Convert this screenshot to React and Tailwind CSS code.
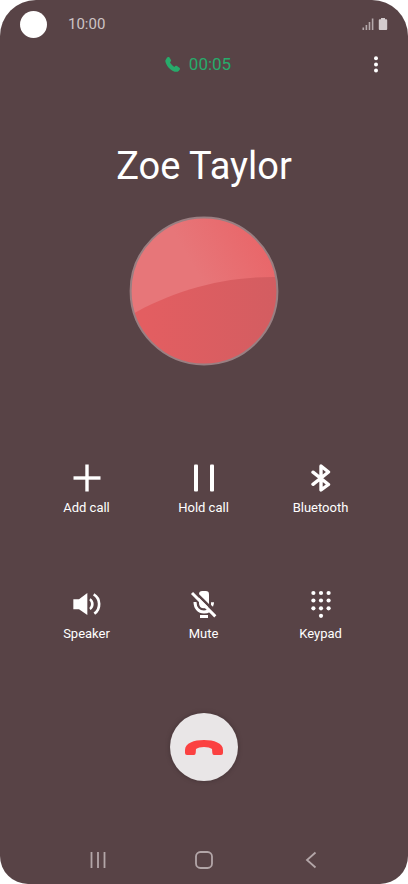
import { useState } from "react";

function AddIcon() {
  return (
    <svg width="28" height="28" viewBox="0 0 28 28" fill="#fff" aria-hidden="true">
      <rect x="0.5" y="12.3" width="27" height="3.4" />
      <rect x="12.3" y="0.5" width="3.4" height="27" />
    </svg>
  );
}

function HoldIcon() {
  return (
    <svg width="28" height="28" viewBox="0 0 28 28" fill="#fff" aria-hidden="true">
      <rect x="4" y="0.5" width="4" height="27" rx="1" />
      <rect x="20" y="0.5" width="4" height="27" rx="1" />
    </svg>
  );
}

function BluetoothIcon() {
  return (
    <svg width="28" height="28" viewBox="0 0 28 28" fill="none" stroke="#fff" strokeWidth="3.4" strokeLinecap="round" strokeLinejoin="round" aria-hidden="true">
      <path d="M6 8.2L21.5 20.5L14 26V2L21.5 8L6 20.3" />
    </svg>
  );
}

function SpeakerIcon() {
  return (
    <svg width="28" height="28" viewBox="0 0 84 84" aria-hidden="true">
      <path d="M1 28H18L43 9V75L18 58H1Z" fill="#fff" />
      <path d="M52 25Q62 31 62 42Q62 54 52 60L49 54Q54 49 54 42Q54 36 49 31Z" fill="#fff" />
      <path d="M62 13C83 25 84 57 64 71" fill="none" stroke="#fff" strokeWidth="8" />
    </svg>
  );
}

function MuteIcon() {
  return (
    <svg width="28" height="28" viewBox="0 0 84 84" aria-hidden="true">
      <path d="M27 13Q27 3 37 3H47Q57 3 57 13V40Q57 55 42 55Q27 55 27 40Z" fill="#fff" />
      <path d="M15 36C15 54 26 66 42 66Q51 66 58 62" fill="none" stroke="#fff" strokeWidth="9" />
      <path d="M17 8L86 77" stroke="#584346" strokeWidth="8" />
      <path d="M63 37H72Q72 44 69 50L63 45Z" fill="#fff" />
      <path d="M6 9L76 79" stroke="#fff" strokeWidth="9" />
      <rect x="30" y="75" width="24" height="9" fill="#fff" />
    </svg>
  );
}

function KeypadIcon() {
  const dots = [
    [6.4, 3], [14, 3], [21.6, 3],
    [6.4, 10.5], [14, 10.5], [21.6, 10.5],
    [6.4, 18.3], [14, 18.3], [21.6, 18.3],
    [14, 25.8],
  ];
  return (
    <svg width="28" height="28" viewBox="0 0 28 28" fill="#fff" aria-hidden="true">
      {dots.map(([cx, cy]) => (
        <circle key={`${cx}-${cy}`} cx={cx} cy={cy} r="2.1" />
      ))}
    </svg>
  );
}

const actions = [
  { label: "Add call", Icon: AddIcon },
  { label: "Hold call", Icon: HoldIcon },
  { label: "Bluetooth", Icon: BluetoothIcon },
  { label: "Speaker", Icon: SpeakerIcon },
  { label: "Mute", Icon: MuteIcon },
  { label: "Keypad", Icon: KeypadIcon },
];

function StatusBar() {
  return (
    <div className="flex h-12 items-center px-5">
      <span className="size-[27px] rounded-full bg-white" />
      <span className="ml-[21px] text-[15px] leading-5 text-[#cdc3c5]">10:00</span>
      <div className="ml-auto flex items-center gap-1">
        <svg width="12" height="12" viewBox="0 0 12 12" fill="#b5a9ab" aria-hidden="true">
          <rect x="0.5" y="9.5" width="1.6" height="2.5" />
          <rect x="3.6" y="7" width="1.6" height="5" />
          <rect x="6.7" y="4" width="1.6" height="8" />
          <rect x="9.8" y="0.5" width="1.6" height="11.5" />
        </svg>
        <svg width="10" height="12" viewBox="0 0 10 12" fill="#d3cbcd" aria-hidden="true">
          <path d="M3 0H7V1.2H8.3Q9.2 1.2 9.2 2.2V11Q9.2 12 8.3 12H1.7Q0.8 12 0.8 11V2.2Q0.8 1.2 1.7 1.2H3Z" />
        </svg>
      </div>
    </div>
  );
}

function CallHeader() {
  return (
    <div className="grid h-8 grid-cols-[1fr_auto_1fr] items-center pr-5 pl-2">
      <div className="col-start-2 flex items-center gap-2 text-[#27ab6b]">
        <svg width="16" height="16" viewBox="0 -3 44 48" fill="currentColor" aria-hidden="true">
          <path d="M2 5C4 1 8 -1 11 1L16 9C17 12 15 13 13 16C15 21 21 27 26 30C29 27 31 25 34 27L42 33C44 35 43 38 39 42C36 45 32 45 27 44C13 40 1 25 -1 13C-1 9 0 8 2 5Z" />
        </svg>
        <span className="text-[17px] leading-6">00:05</span>
      </div>
      <button type="button" aria-label="More options" className="flex h-6 w-6 items-center justify-center justify-self-end">
        <svg width="6" height="18" viewBox="0 0 6 18" fill="#fff" aria-hidden="true">
          <circle cx="3" cy="3.2" r="2" />
          <circle cx="3" cy="9.4" r="2" />
          <circle cx="3" cy="15.6" r="2" />
        </svg>
      </button>
    </div>
  );
}

function Avatar() {
  return (
    <svg width="150" height="150" viewBox="0 0 150 150" className="mx-auto" aria-hidden="true">
      <defs>
        <linearGradient id="avatarTop" x1="0.3" y1="0.6" x2="1" y2="0.2">
          <stop offset="0.3" stopColor="#e77679" />
          <stop offset="1" stopColor="#e96467" />
        </linearGradient>
        <linearGradient id="avatarBottom" x1="0" y1="0" x2="1" y2="0">
          <stop offset="0.1" stopColor="#e35e61" />
          <stop offset="1" stopColor="#d35d61" />
        </linearGradient>
        <clipPath id="avatarClip">
          <circle cx="75" cy="75" r="73.5" />
        </clipPath>
      </defs>
      <g clipPath="url(#avatarClip)">
        <rect width="150" height="150" fill="url(#avatarTop)" />
        <path d="M0 100C45 74 95 60 150 61V150H0Z" fill="url(#avatarBottom)" />
      </g>
      <circle cx="75" cy="75" r="73.4" fill="none" stroke="#9a7f82" strokeWidth="2" />
    </svg>
  );
}

function NavBar() {
  return (
    <nav className="mt-auto grid grid-cols-3 px-11 pb-3">
      <button type="button" aria-label="Recent apps" className="flex h-6 items-center justify-center">
        <svg width="18" height="18" viewBox="0 0 18 18" stroke="#b3a6a8" strokeWidth="1.8" aria-hidden="true">
          <path d="M3.5 1V17M10 1V17M16.5 1V17" />
        </svg>
      </button>
      <button type="button" aria-label="Home" className="flex h-6 items-center justify-center">
        <svg width="18" height="18" viewBox="0 0 18 18" fill="none" stroke="#b3a6a8" strokeWidth="1.8" aria-hidden="true">
          <rect x="1" y="1" width="16" height="16" rx="4.5" />
        </svg>
      </button>
      <button type="button" aria-label="Back" className="flex h-6 items-center justify-center">
        <svg width="18" height="18" viewBox="0 0 18 18" fill="none" stroke="#b3a6a8" strokeWidth="1.8" aria-hidden="true">
          <path d="M13.5 1.5L5 9L13.5 16.5" />
        </svg>
      </button>
    </nav>
  );
}

export default function App() {
  const [active, setActive] = useState(null);

  return (
    <div className="min-h-screen bg-white font-[Roboto,sans-serif]">
      <main className="flex min-h-screen flex-col rounded-t-[36px] rounded-b-[28px] bg-[#584346] text-white">
        <StatusBar />
        <CallHeader />

        <section className="mt-16">
          <h1 className="text-center text-[38px] leading-11">Zoe Taylor</h1>
          <div className="mt-7">
            <Avatar />
          </div>
        </section>

        <div className="mt-[98px] grid grid-cols-3 gap-y-18 pr-[29px] pl-7">
          {actions.map(({ label, Icon }) => (
            <button
              key={label}
              type="button"
              aria-pressed={active === label}
              onClick={() => setActive(active === label ? null : label)}
              className="flex flex-col items-center gap-1.5 text-[13px] leading-5"
            >
              <Icon />
              {label}
            </button>
          ))}
        </div>

        <button
          type="button"
          aria-label="End call"
          className="mx-auto mt-[69px] flex size-17 items-center justify-center rounded-full bg-[#e9e6e7] shadow-[0_0_3px_2px_#4f3c3f]"
        >
          <svg width="38" height="15" viewBox="0 0 38 15" fill="#fb4141" aria-hidden="true">
            <path d="M2 15Q0 15 0 13V10C0 3 9 0 19 0S38 3 38 10V13Q38 15 36 15H29Q27.5 15 27.3 13L27 9C24 6.3 14 6.3 11 9L10.7 13Q10.5 15 9 15Z" />
          </svg>
        </button>

        <NavBar />
      </main>
    </div>
  );
}
